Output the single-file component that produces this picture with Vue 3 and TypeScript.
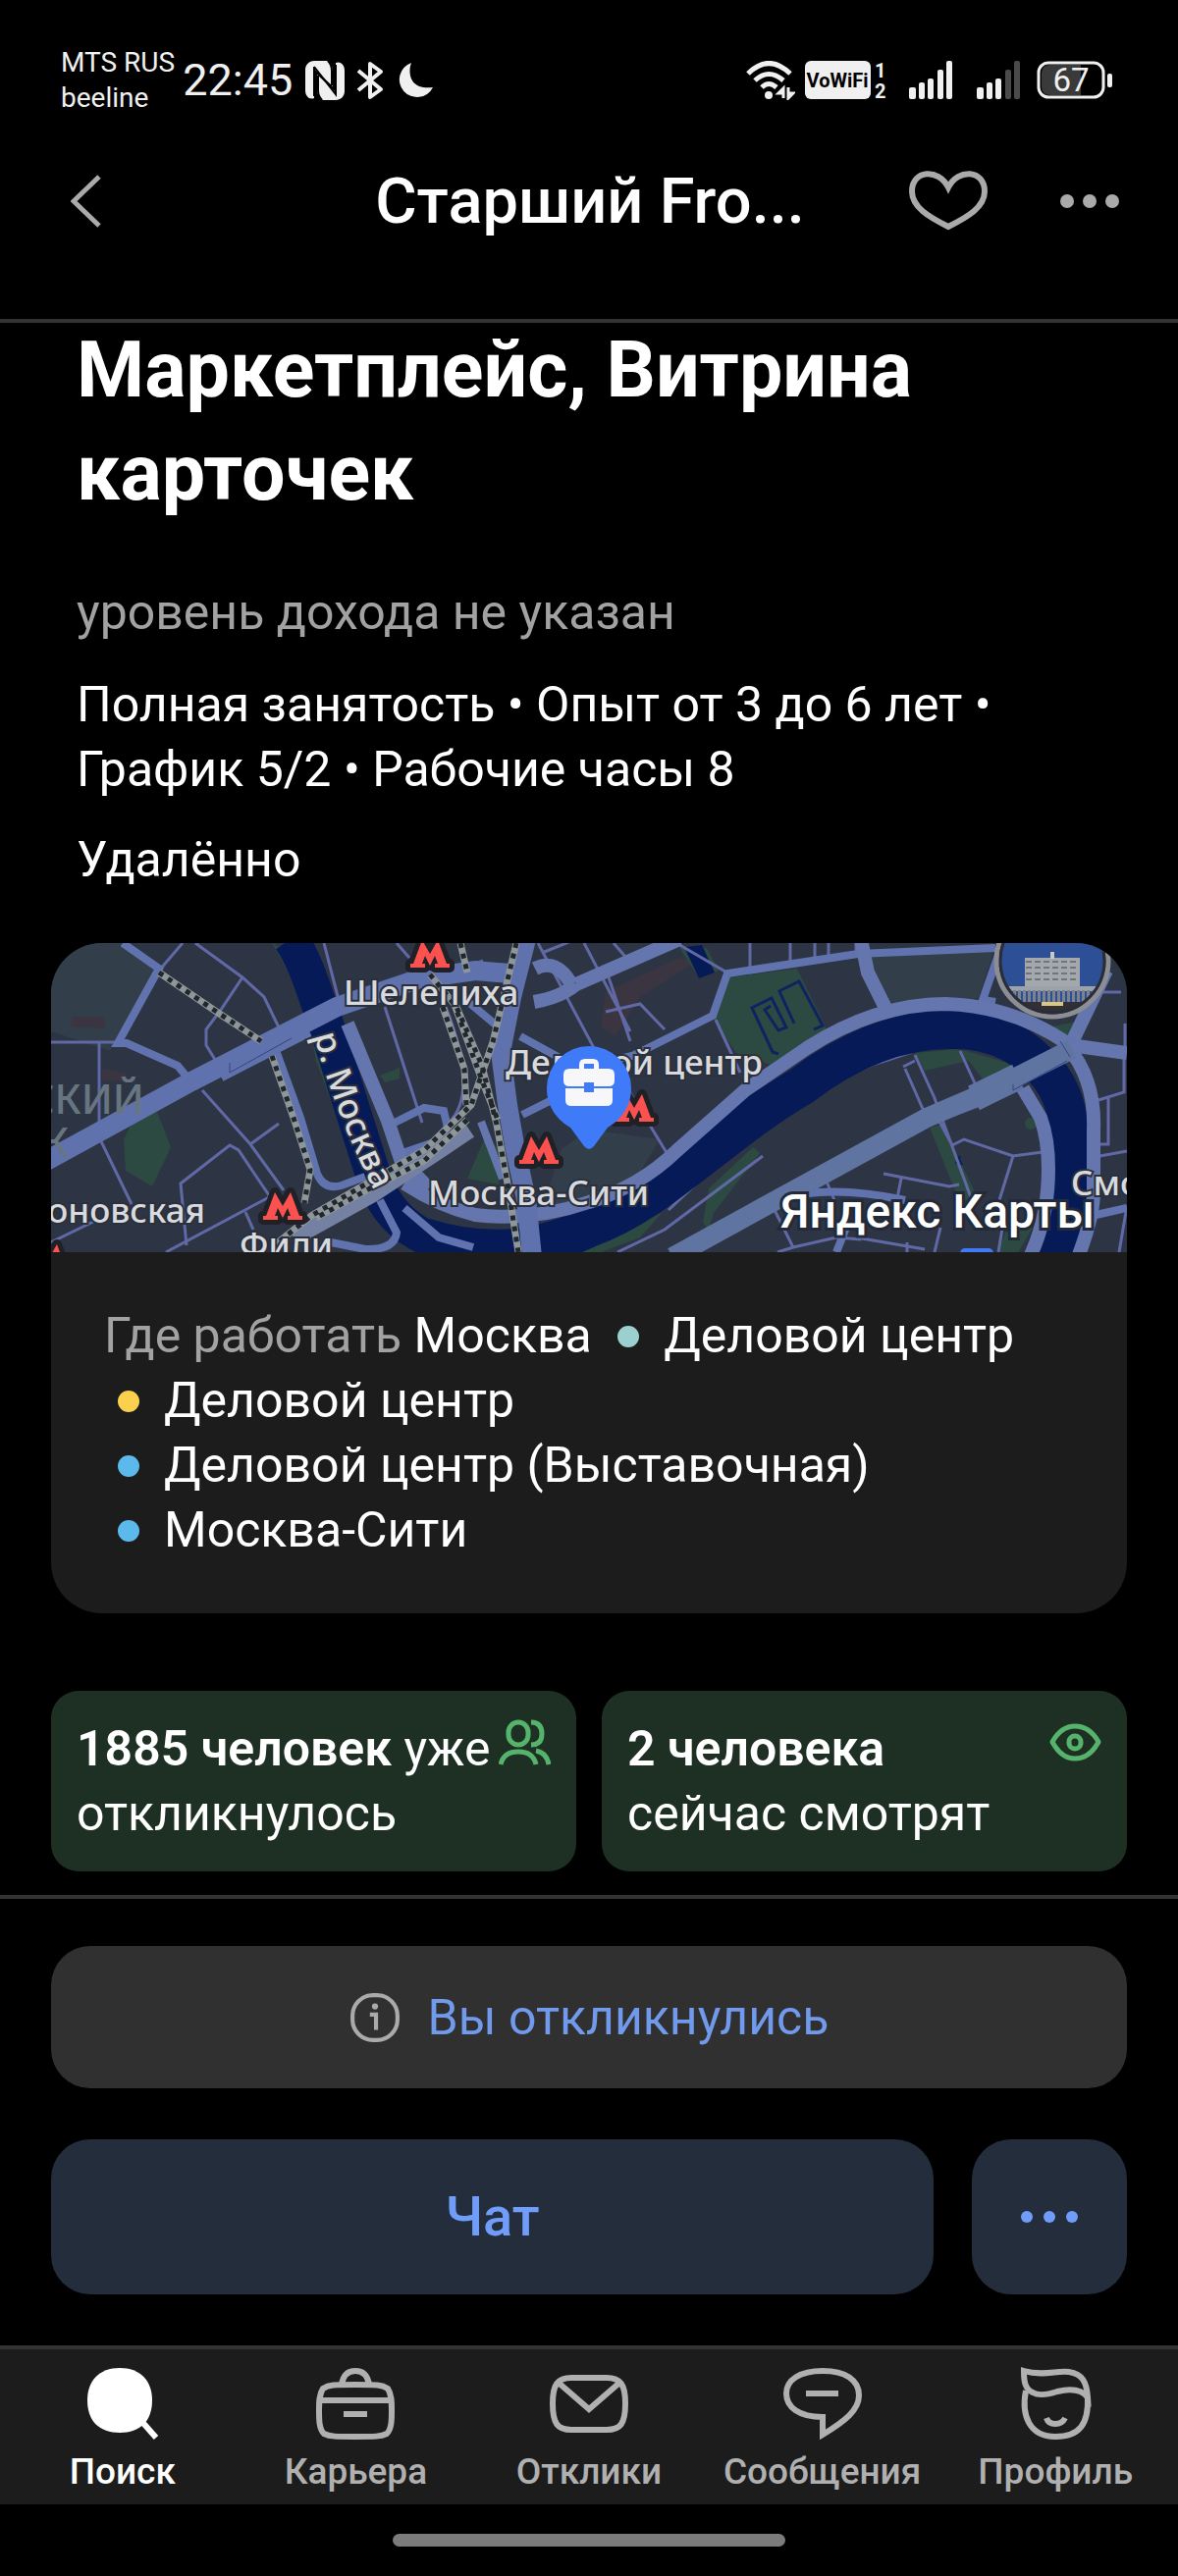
<script setup lang="ts">
import { ref } from 'vue'

interface Station {
  name: string
  color: string
}

const stations: Station[] = [
  { name: 'Деловой центр', color: '#9bd0cf' },
  { name: 'Деловой центр', color: '#fbd04c' },
  { name: 'Деловой центр (Выставочная)', color: '#5cb9ec' },
  { name: 'Москва-Сити', color: '#5cb9ec' },
]

const tabs = [
  { id: 'search', label: 'Поиск' },
  { id: 'career', label: 'Карьера' },
  { id: 'replies', label: 'Отклики' },
  { id: 'messages', label: 'Сообщения' },
  { id: 'profile', label: 'Профиль' },
]
const activeTab = ref('search')

const metro: [number, number][] = [
  [366, -3],
  [477, 197],
  [216, 254],
  [574, 154],
  [-22, 307],
]
</script>

<template>
  <div class="screen">
    <div class="status">
      <div class="carrier"><span>MTS RUS</span><span>beeline</span></div>
      <span class="clock">22:45</span>
      <svg class="nfc" width="40" height="40" viewBox="0 0 40 40">
        <path d="M9 0H22C29 4 28 10 28 16V26L9 8V38C4 40 0 36 0 30V9C0 4 4 0 9 0Z" fill="#f0f0f0" />
        <path d="M31 40H18C12 37 12 31 12 25V14L31 32V2C36 0 40 4 40 10V31C40 36 36 40 31 40Z" fill="#f0f0f0" />
        <path d="M9 6L31 34V4M9 36V6M13 15V30C13 36 15 38 17 40M27 25V10C27 5 25 2 23 0" fill="none" stroke="#000" stroke-width="2" />
      </svg>
      <svg class="bt" width="28" height="40" viewBox="0 0 28 40">
        <path d="M2 10L25 29L14 37V3L25 11L2 30" fill="none" stroke="#f0f0f0" stroke-width="4" stroke-linejoin="round" />
      </svg>
      <svg width="38" height="38" viewBox="0 0 38 38">
        <path d="M15 1C11 12 14 29 37 26A18 18 0 1 1 15 1Z" fill="#f0f0f0" />
      </svg>
      <div class="status-right">
        <svg width="50" height="40" viewBox="0 0 50 40">
          <g fill="none" stroke="#f0f0f0" stroke-width="5">
            <path d="M2 13Q23 -8 45 13" />
            <path d="M9 20Q23 7 38 20" />
            <path d="M16 27Q23 20 31 27" />
          </g>
          <circle cx="23" cy="35" r="4" fill="#f0f0f0" />
          <path d="M38 38V28L33 33H38M43 27V38L48 33H43" fill="none" stroke="#f0f0f0" stroke-width="3" />
        </svg>
        <svg class="vowifi" width="83" height="40" viewBox="0 0 83 40">
          <rect width="67" height="39" rx="6" fill="#f0f0f0" />
          <text x="33" y="27" text-anchor="middle" font-size="20" font-weight="700" fill="#000">VoWiFi</text>
          <text x="71" y="17" font-size="20" font-weight="700" fill="#f0f0f0">1</text>
          <text x="71" y="38" font-size="20" font-weight="700" fill="#f0f0f0">2</text>
        </svg>
        <svg class="bars" width="46" height="40" viewBox="0 0 46 40" fill="#f0f0f0">
          <rect y="27" width="7" height="12" rx="2" />
          <rect x="10" y="22" width="6" height="17" rx="2" />
          <rect x="19" y="18" width="6" height="21" rx="2" />
          <rect x="29" y="9" width="6" height="30" rx="2" />
          <rect x="38" width="6" height="39" rx="2" />
        </svg>
        <svg class="bars" width="46" height="40" viewBox="0 0 46 40" fill="#f0f0f0">
          <rect y="27" width="7" height="12" rx="2" />
          <rect x="10" y="22" width="6" height="17" rx="2" />
          <rect x="19" y="18" width="6" height="21" rx="2" />
          <rect x="29" y="9" width="6" height="30" rx="2" fill="#4a4a4a" />
          <rect x="38" width="6" height="39" rx="2" fill="#4a4a4a" />
        </svg>
        <svg class="battery" width="78" height="40" viewBox="0 0 78 40">
          <path d="M14 4H45V35H14Q5 35 5 26V13Q5 4 14 4Z" fill="#3a3a3a" />
          <rect x="2" y="2" width="66" height="35" rx="10" fill="none" stroke="#f0f0f0" stroke-width="3" />
          <rect x="72" y="13" width="5" height="14" rx="2" fill="#f0f0f0" />
          <text x="35" y="31" text-anchor="middle" font-size="33" fill="#f0f0f0">67</text>
        </svg>
      </div>
    </div>

    <header class="header">
      <button class="icon-btn back" type="button" aria-label="Назад">
        <svg width="32" height="54" viewBox="0 0 32 54"><path d="M29 2L3 27L29 52" fill="none" stroke="#aaa" stroke-width="5" /></svg>
      </button>
      <div class="title">Старший Fro...</div>
      <button class="icon-btn heart" type="button" aria-label="В избранное">
        <svg width="80" height="62" viewBox="0 0 80 62">
          <path d="M40 17C30 -3 3 -1 3 21C3 37 20 47 40 57C60 47 77 37 77 21C77 -1 50 -3 40 17Z" fill="none" stroke="#aaa" stroke-width="6" />
        </svg>
      </button>
      <button class="icon-btn" type="button" aria-label="Ещё">
        <svg width="60" height="14" viewBox="0 0 60 14" fill="#aaa"><circle cx="7" cy="7" r="7" /><circle cx="30" cy="7" r="7" /><circle cx="53" cy="7" r="7" /></svg>
      </button>
    </header>

    <main class="content">
      <h1>Маркетплейс, Витрина карточек</h1>
      <p class="income">уровень дохода не указан</p>
      <p class="terms">Полная занятость • Опыт от 3 до 6 лет • График 5/2 • Рабочие часы 8</p>
      <p class="remote">Удалённо</p>

      <section class="place">
        <svg class="map" viewBox="0 0 1096 315">
          <defs>
            <path id="metro-m" d="M0 28V24H3L12 0L20 14L28 0L37 24H40V28H25V24H28L25 16L20 26L15 16L12 24H15V28Z" />
            <path id="river-name" d="M268 94C280 140 300 195 332 258" />
            <clipPath id="landmark"><circle cx="1020" cy="18" r="54" /></clipPath>
          </defs>
          <rect width="1096" height="315" fill="#2d3545" />
          <g fill="#323e49">
            <path d="M0 0H73L108 25L60 110L0 90Z" />
            <path d="M830 15L960 8L945 56L855 68Z" />
            <path d="M548 190L620 200L590 250L500 270L520 210Z" />
          </g>
          <g fill="#3b3541">
            <path d="M565 50L640 15L655 20L600 55L575 95L560 85Z" />
            <path d="M22 75L55 76V87L20 85Z" />
            <path d="M52 128L75 132L80 142L52 140Z" />
          </g>
          <g fill="#2c4a42">
            <path d="M85 178L108 172L122 208L103 248L76 232L74 200Z" />
            <path d="M690 35L760 26L790 88L745 128L698 112L675 78Z" />
            <path d="M225 0L245 10L262 60L276 72L300 150L322 240L300 200L270 120L260 60Z" />
            <path d="M443 196L458 212L456 246L424 240Z" />
            <path d="M640 5L668 5L680 28L660 35Z" />
            <path d="M880 112L925 108L985 125L950 140L935 120L890 130Z" />
            <path d="M895 188L908 185L945 262L925 262Z" />
            <path d="M548 300L622 275L600 300L560 315H530Z" />
            <path d="M670 250L715 208L722 214L675 275L670 292L664 285Z" />
            <path d="M972 295L1000 290L985 315H965Z" />
            <path d="M335 135L355 127V138L340 142Z" />
            <circle cx="998" cy="184" r="6" />
            <path d="M1020 85L1045 80L1035 100Z" />
          </g>
          <path d="M645 4L663 2L676 30L660 36Z" fill="#061a58" />
          <path d="M741 113L735 111L714 66L734 56L749 86L741 89L727 68L733 64M757 82L742 49L762 39L786 84L777 88M926 217L922 225M924 220L928 226" fill="none" stroke="#0e2360" stroke-width="3" />
          <g fill="none" stroke="#6069a5" stroke-width="3">
            <path d="M134 0L110 28M147 0L195 35L217 55L234 90M195 35L173 68L158 88V104L169 122M0 101H66M49 101V198L82 266M154 150L203 205L237 252M138 308L132 245L182 206L191 211L222 257M117 315L222 259M203 205L232 184M0 305L45 283M198 274L206 292" />
            <path d="M278 0L293 58M352 0L365 15M340 65L378 183M402 65C420 110 430 160 405 183M218 0M496 0L560 120M543 0L590 90M500 10L540 -6M568 35L590 100M625 88L600 62L565 70M677 78L702 132M570 120L637 230M637 0L692 32M712 0V25M753 0V18M778 0V15M792 0V12M820 0V10M573 0L586 15" />
            <path d="M880 114L900 158L938 262M870 128L892 178M868 126L880 120M926 110L942 145M912 178L960 160M905 182L918 206L930 200L980 217L1010 213M980 217L966 262M848 235L915 248L925 246M866 240L862 260M790 243L798 262M737 272L756 310L740 315M756 310L800 300M800 300L825 302M820 300L890 312M872 305V315" />
            <path d="M577 315L625 292L725 217M629 272L700 205L755 163L778 147L837 124L877 111M1067 160L1093 152V112M1077 157V205H1064M1063 218L1096 212M1090 50H1068" />
            <path d="M906 290L900 315M970 285L965 315M1096 268L1088 315M1094 82V105M410 30L440 18" />
          </g>
          <g fill="none" stroke="#061a58" stroke-width="36">
            <path d="M244 -4C262 22 270 58 280 82L304 160L328 236Q344 290 400 307Q470 321 548 288" />
            <path d="M540 292C610 262 635 232 668 202L762 146" />
            <path d="M380 300Q470 328 548 290C620 265 680 195 764 146Q840 88 915 88Q970 86 1005 122Q1037 150 1037 200V255Q1035 290 1018 325" stroke-width="40" />
          </g>
          <g fill="none" stroke="#6073ae" stroke-width="8">
            <path d="M73 0L110 26L68 102H77L129 125L143 142" />
            <path d="M230 112L254 178L271 235Q278 252 296 247L320 238" />
            <path d="M335 262L352 295Q350 313 320 312L285 305" />
            <path d="M350 183L380 168L400 171L404 188L390 203L358 214" />
            <path d="M425 60L455 85L462 100M478 95L520 118M480 175L510 160" />
            <path d="M548 125L592 115L674 74L689 31L822 11L962 5M962 60L949 58L965 12" />
            <path d="M360 270L395 300L430 310" />
            <path d="M800 315L812 285M740 262Q790 245 870 262M1060 278L1096 270" />
          </g>
          <g fill="none" stroke="#6476ad" stroke-width="14">
            <path d="M302 82L321 128L343 181L356 220L385 250" />
            <path d="M360 245Q395 268 432 277Q490 284 548 264Q600 248 637 212L707 150L770 107Q840 62 911 62Q980 64 1038 104L1096 112" />
            <path d="M1036 106Q1064 140 1062 190V258Q1060 285 1046 320" />
            <path d="M990 148L1008 178Q1016 200 1016 230Q1016 280 997 320" />
            <path d="M825 -4L832 30L852 70" />
            <path d="M1040 101L1075 28" />
            <path d="M493 26Q515 15 530 42M492 60Q520 55 535 42M535 42L640 -4" />
            <path d="M438 182L460 240" stroke-width="8" />
          </g>
          <g fill="none" stroke="#6072ad" stroke-width="20">
            <path d="M-5 222L143 141L291 65L376 36L432 28L480 32" />
            <path d="M170 130L260 84" stroke-width="24" />
            <path d="M484 -4L469 55L458 111L465 165L473 211L484 261L490 320" />
            <path d="M633 320L733 265L892 178L955 151L1040 108" stroke="#6074a2" />
            <path d="M940 158L985 136" stroke="#6074a2" stroke-width="27" />
            <path d="M247 300L328 255L395 211L426 190" stroke="#7581a3" stroke-width="18" />
          </g>
          <path d="M182 122V132L245 97M980 144V150L1035 120M1028 100L1038 116" fill="none" stroke="#36447c" stroke-width="1" />
          <g fill="none" stroke="#8d9698" stroke-width="7">
            <path d="M110 30L173 73L214 100M225 115L247 178L264 231L258 265M417 0L424 30M399 65L421 128L423 165M386 32L413 65L439 125L454 185L465 245L476 315M410 60L439 140L455 180M474 0L450 101L428 165L380 211L265 278L225 310M424 180L380 222L325 250L270 280" />
          </g>
          <g fill="none" stroke="#22262d" stroke-width="5" stroke-dasharray="5 6">
            <path d="M110 30L173 73L214 100M225 115L247 178L264 231L258 265M417 0L424 30M399 65L421 128L423 165M386 32L413 65L439 125L454 185L465 245L476 315M410 60L439 140L455 180M474 0L450 101L428 165L380 211L265 278L225 310M424 180L380 222L325 250L270 280" />
          </g>

          <g clip-path="url(#landmark)">
            <rect x="960" y="-40" width="120" height="120" fill="#2c4f95" />
            <rect x="992" y="15" width="56" height="30" fill="#a4a7ac" />
            <path d="M993 19H1047M993 25H1047M993 31H1047M993 37H1047" stroke="#6e7480" stroke-width="2" stroke-dasharray="6 3" />
            <rect x="1018" y="9" width="4" height="7" fill="#c8c8c8" />
            <rect x="975" y="44" width="90" height="5" fill="#9da1a8" />
            <path d="M975 54H1065" stroke="#7c828e" stroke-width="12" stroke-dasharray="3 2" />
            <rect x="975" y="60" width="90" height="20" fill="#332f36" />
            <rect x="1009" y="60" width="22" height="4" fill="#d9c780" />
          </g>
          <circle cx="1020" cy="18" r="57" fill="none" stroke="#8c8e94" stroke-width="5" />
          <circle cx="1020" cy="18" r="53" fill="none" stroke="#2a2d36" stroke-width="3" />
          <rect x="926" y="311" width="34" height="12" rx="5" fill="#3f7af8" />

          <g v-for="([x, y], i) in metro" :key="i">
            <use href="#metro-m" :x="x" :y="y" fill="#1f2127" stroke="#1f2127" stroke-width="10" stroke-linejoin="round" />
            <use href="#metro-m" :x="x" :y="y" fill="#fb524f" />
          </g>

          <g class="labels">
            <text x="298" y="63">Шелепиха</text>
            <text x="463" y="134">Деловой центр</text>
            <text x="384" y="267">Москва-Сити</text>
            <text x="1039" y="257">Смо</text>
            <text x="157" y="285" text-anchor="end">оновская</text>
            <text x="192" y="320">Фили</text>
            <text><textPath href="#river-name">р. Москва</textPath></text>
          </g>
          <g class="district">
            <text x="95" y="174" text-anchor="end">СКИЙ</text>
            <text x="18" y="218" text-anchor="end">К</text>
          </g>

          <path d="M505 148A43 43 0 1 1 591 148C591 168 579 181 567 188L553 207Q548 213 543 207L529 188C517 181 505 168 505 148Z" fill="#3f7af8" />
          <path d="M528 128H538V124Q538 118 544 118H552Q558 118 558 124V128H568Q574 128 574 134V140Q574 146 568 146H553V142H543V146H528Q522 146 522 140V134Q522 128 528 128ZM543 128H553V123H543ZM524 148H543V152H553V148H572V160Q572 166 566 166H530Q524 166 524 160Z" fill="#f7f7fa" fill-rule="evenodd" />
          <text class="brand" x="1063" y="290" text-anchor="end">Яндекс Карты</text>
        </svg>
        <div class="address">
          <span class="muted">Где работать</span> Москва
          <template v-for="(s, i) in stations" :key="i">
            <span class="station"><i class="dot" :style="{ background: s.color }"></i>{{ s.name }}</span>{{ ' ' }}
          </template>
        </div>
      </section>

      <div class="stats">
        <div class="stat">
          <p><b>1885 человек</b> уже откликнулось</p>
          <svg width="53" height="53" viewBox="0 0 53 53" fill="none" stroke="#55b36b" stroke-width="5">
            <rect x="10" y="6" width="20" height="23" rx="10" />
            <path d="M33 6Q44 6 44 18Q44 29 33 29" />
            <path d="M2 49Q5 36 20 36Q35 36 38 49M38 35Q49 37 51 49" />
          </svg>
        </div>
        <div class="stat">
          <p><b>2 человека</b><br />сейчас смотрят</p>
          <svg width="53" height="53" viewBox="0 0 53 53" fill="none" stroke="#55b36b" stroke-width="5">
            <path d="M3 26Q12 10 26 10Q41 10 50 26Q41 43 26 43Q12 43 3 26Z" stroke-linejoin="round" />
            <rect x="20" y="20" width="12" height="13" rx="6" />
          </svg>
        </div>
      </div>
    </main>

    <section class="actions">
      <button class="applied" type="button">
        <svg width="52" height="52" viewBox="0 0 50 50">
          <rect x="3" y="3" width="44" height="44" rx="20" fill="none" stroke="#aaa" stroke-width="4" />
          <circle cx="25" cy="14" r="3" fill="#aaa" />
          <path d="M20 22H26V37" fill="none" stroke="#aaa" stroke-width="4" />
        </svg>
        Вы откликнулись
      </button>
      <div class="row">
        <button class="chat" type="button">Чат</button>
        <button class="more" type="button" aria-label="Ещё">
          <svg width="60" height="14" viewBox="0 0 60 14" fill="#709dfa"><circle cx="7" cy="7" r="6" /><circle cx="30" cy="7" r="6" /><circle cx="53" cy="7" r="6" /></svg>
        </button>
      </div>
    </section>

    <nav class="tabs">
      <button v-for="t in tabs" :key="t.id" class="tab" :class="{ active: t.id === activeTab }" type="button" @click="activeTab = t.id">
        <svg width="80" height="80" viewBox="0 0 80 80" fill="none" stroke="currentColor" stroke-width="6">
          <template v-if="t.id === 'search'">
            <path d="M37 3C58 3 70 16 70 36C70 57 58 69 37 69C16 69 4 57 4 36C4 16 16 3 37 3Z" fill="currentColor" stroke="none" />
            <path d="M59 57L74 74" />
          </template>
          <template v-else-if="t.id === 'career'">
            <path d="M40 20C62 20 67 20 73 24C77 30 77 38 77 46C77 56 77 65 72 70C66 73 60 73 40 73C20 73 14 73 8 70C3 65 3 56 3 46C3 38 3 30 7 24C13 20 18 20 40 20Z" />
            <path d="M26 20Q28 6 40 6Q52 6 54 20M4 36H76M28 50H52" />
          </template>
          <template v-else-if="t.id === 'replies'">
            <path d="M40 13H58C72 13 77 20 77 39C77 60 72 66 58 66H22C8 66 3 60 3 39C3 20 8 13 22 13Z" />
            <path d="M10 19L40 45L70 19" />
          </template>
          <template v-else-if="t.id === 'messages'">
            <path d="M40 53C16 53 3 43 3 29C3 15 17 6 40 6C63 6 77 15 77 31C77 46 63 57 40 71ZM23 29H56" />
          </template>
          <template v-else>
            <path d="M8 6C28 12 42 5 54 7C68 9 72 18 73 33C67 25 55 24 42 27C30 31 22 31 17 28C9 24 8 17 8 6Z" />
            <path d="M10 26C5 52 14 73 40 73C65 73 74 60 73 33M31 54Q33 60 40 60Q47 60 50 54" />
          </template>
        </svg>
        <span>{{ t.label }}</span>
      </button>
    </nav>
    <div class="home"><span></span></div>
  </div>
</template>

<style>
body {
  background: #000;
}
</style>

<style scoped>
.screen {
  min-height: 100vh;
  display: flex;
  flex-direction: column;
  background: #000;
  color: #fff;
  font-family: Roboto, "Noto Sans", sans-serif;
  font-size: 50px;
  line-height: 66px;
}
svg {
  display: block;
  flex: none;
}
p,
h1 {
  margin: 0;
}
button {
  border: 0;
  padding: 0;
  background: none;
  color: inherit;
  font: inherit;
  cursor: pointer;
}
.status {
  display: flex;
  align-items: center;
  height: 76px;
  padding: 44px 66px 0 62px;
  color: #f0f0f0;
}
.carrier {
  display: flex;
  flex-direction: column;
  font-size: 28px;
  line-height: 36px;
}
.clock {
  margin: 0 13px 0 8px;
  font-size: 45px;
}
.bt {
  margin: 0 13px 0 12px;
}
.status-right {
  display: flex;
  margin-left: auto;
}
.vowifi {
  margin: 0 23px 0 10px;
}
.bars {
  margin-right: 23px;
}
.battery {
  margin-left: -8px;
}
.header {
  display: flex;
  align-items: center;
  height: 169px;
  padding: 0 60px 36px 72px;
  border-bottom: 4px solid #333;
}
.icon-btn {
  display: flex;
  align-items: center;
}
.back {
  width: 250px;
}
.title {
  flex: 1;
  text-align: center;
  font-size: 65px;
  font-weight: 500;
  white-space: nowrap;
}
.heart {
  margin: 0 74px 0 46px;
}
.content {
  flex: 1;
  margin-top: -4px;
  padding: 0 52px 24px;
}
h1 {
  padding: 0 26px;
  font-size: 79px;
  line-height: 105px;
  font-weight: 700;
}
.income,
.terms,
.remote {
  padding: 0 26px;
}
.income {
  margin-top: 56px;
  color: #a2a2a2;
}
.terms {
  margin-top: 28px;
}
.remote {
  margin-top: 26px;
}
.place {
  margin-top: 52px;
  border-radius: 52px;
  overflow: hidden;
  background: #1c1c1c;
}
.map {
  width: 100%;
  height: auto;
}
.labels {
  font-family: "Noto Sans", sans-serif;
  font-size: 35px;
  font-weight: 500;
  fill: #d8dade;
  stroke: #2b303c;
  stroke-width: 4px;
  paint-order: stroke;
}
.district {
  font-family: "Noto Sans", sans-serif;
  font-size: 42px;
  font-weight: 500;
  fill: #66757f;
}
.brand {
  font-size: 48px;
  font-weight: 500;
  fill: #fff;
  stroke: #232a3a;
  stroke-width: 6px;
  paint-order: stroke;
}
.address {
  padding: 52px 52px 52px 54px;
}
.muted {
  color: #a2a2a2;
}
.station {
  display: inline-block;
  white-space: nowrap;
}
.dot {
  display: inline-block;
  width: 22px;
  height: 22px;
  margin: 0 25px 0 14px;
  border-radius: 50%;
  vertical-align: 5px;
}
.stats {
  display: grid;
  grid-template-columns: 1fr 1fr;
  gap: 26px;
  margin-top: 79px;
}
.stat {
  display: flex;
  justify-content: space-between;
  padding: 26px;
  border-radius: 28px;
  background: #1e3023;
}
.stat b {
  font-weight: 600;
}
.actions {
  display: flex;
  flex-direction: column;
  gap: 52px;
  padding: 48px 52px 52px;
  border-top: 4px solid #333;
}
.applied {
  display: flex;
  align-items: center;
  justify-content: center;
  gap: 28px;
  height: 145px;
  border-radius: 40px;
  background: #303030;
  color: #719aed;
}
.row {
  display: flex;
  gap: 39px;
}
.chat,
.more {
  display: flex;
  align-items: center;
  justify-content: center;
  height: 158px;
  border-radius: 40px;
  background: #242d3b;
  color: #709dfa;
}
.chat {
  flex: 1;
  font-size: 56px;
  font-weight: 500;
}
.more {
  width: 158px;
}
.tabs {
  display: grid;
  grid-template-columns: repeat(5, 1fr);
  padding: 16px 6px 11px;
  border-top: 4px solid #333;
  background: #1c1c1c;
}
.tab {
  display: flex;
  flex-direction: column;
  align-items: center;
  gap: 6px;
  font-size: 37px;
  line-height: 45px;
  font-weight: 500;
  color: #b0b0b0;
}
.tab.active {
  color: #fff;
}
.home {
  display: flex;
  justify-content: center;
  height: 43px;
  padding-top: 30px;
}
.home span {
  width: 400px;
  height: 13px;
  border-radius: 7px;
  background: #7b7b7b;
}
</style>
